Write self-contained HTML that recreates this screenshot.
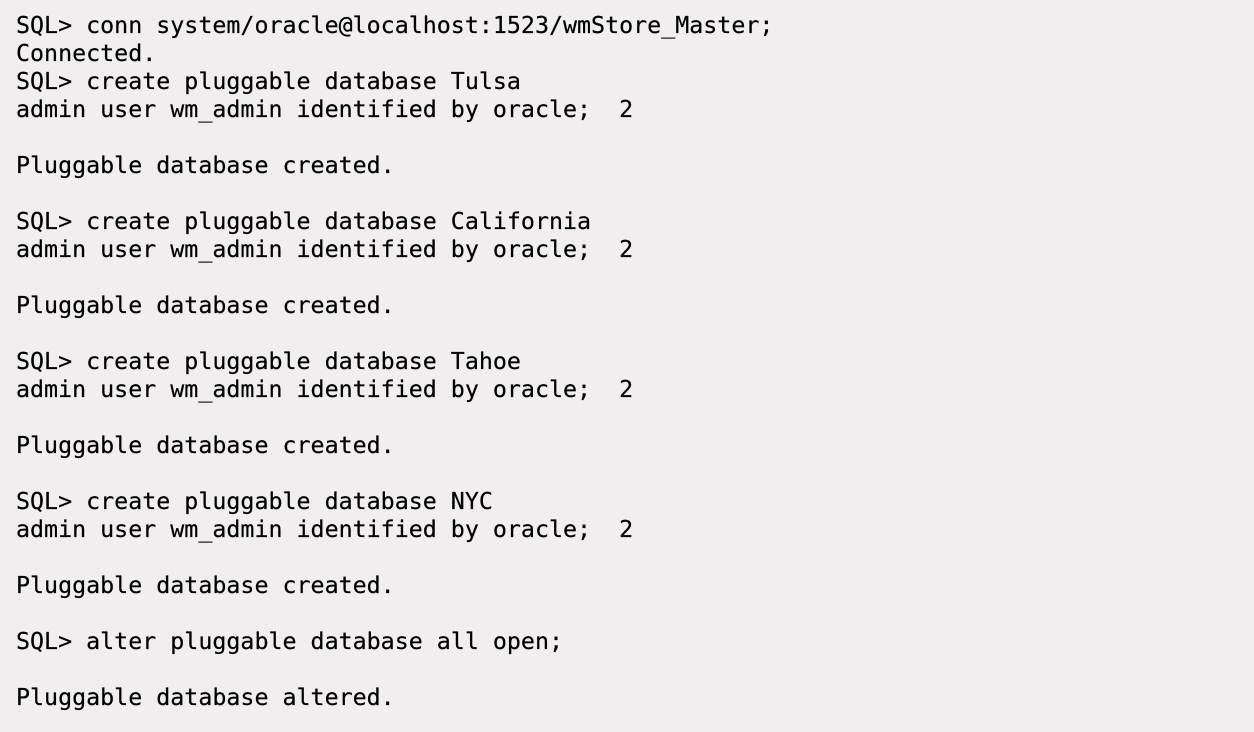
<!DOCTYPE html>
<html><head><style>
html,body{margin:0;padding:0;background:#f0eeef;width:1254px;height:732px;overflow:hidden}
pre{margin:0;position:absolute;left:16px;top:12px;font-family:"DejaVu Sans Mono","Liberation Mono",monospace;font-size:23.3px;line-height:28px;color:#000;-webkit-text-stroke:0.2px #000;}
</style></head><body><pre>SQL&gt; conn system/oracle@localhost:1523/wmStore_Master;
Connected.
SQL&gt; create pluggable database Tulsa
admin user wm_admin identified by oracle;  2

Pluggable database created.

SQL&gt; create pluggable database California
admin user wm_admin identified by oracle;  2

Pluggable database created.

SQL&gt; create pluggable database Tahoe
admin user wm_admin identified by oracle;  2

Pluggable database created.

SQL&gt; create pluggable database NYC
admin user wm_admin identified by oracle;  2

Pluggable database created.

SQL&gt; alter pluggable database all open;

Pluggable database altered.</pre></body></html>
